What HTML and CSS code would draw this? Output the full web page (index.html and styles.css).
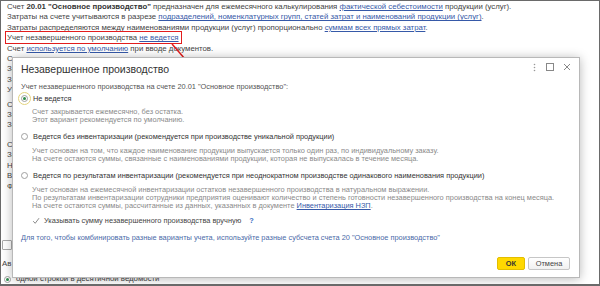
FILE: index.html
```html
<!DOCTYPE html>
<html lang="ru">

<head>
    <meta charset="UTF-8">
    <meta name="viewport" content="width=device-width, initial-scale=1.0">
    <title>Незавершенное производство</title>
    <link rel="stylesheet" href="styles.css">
</head>

<body>

    <div class="frame">

        <!-- account description behind the dialog -->
        <div class="page">
            <div class="group">
                <p class="ln">Счет <b>20.01 "Основное производство"</b> предназначен для ежемесячного калькулирования <a href="#">фактической себестоимости</a> продукции (услуг).</p>
                <p class="ln">Затраты на счете учитываются в разрезе <a href="#">подразделений, номенклатурных групп, статей затрат и наименований продукции (услуг)</a>.</p>
                <p class="ln">Затраты распределяются между наименованиями продукции (услуг) пропорционально <a href="#">суммам всех прямых затрат</a>.</p>
                <p class="ln"><span class="mark">Учет незавершенного производства <a href="#">не ведется</a></span></p>
                <p class="ln">Счет <a href="#">используется по умолчанию</a> при вводе документов.</p>
            </div>

            <!-- only the first letters peek out from under the dialog -->
            <div class="behind">
                <div class="group">
                    <p class="ln">Сч</p>
                    <p class="ln">За</p>
                    <p class="ln">За</p>
                    <p class="ln">Уч</p>
                </div>
                <div class="group">
                    <p class="ln">Сч</p>
                    <p class="ln">За</p>
                    <p class="ln">За</p>
                </div>
                <div class="group group-wide">
                    <p class="ln">Сч</p>
                    <p class="ln">За</p>
                    <p class="ln">Не</p>
                    <p class="ln">Вк</p>
                    <p class="ln">Фо</p>
                </div>
                <div class="page-check"><span class="box"></span></div>
                <p class="ln page-cut">Ав</p>
            </div>

            <div class="page-radio">
                <span class="radio on"></span>
                <span>одной строкой в десятичной ведомости</span>
            </div>
        </div>

        <svg class="arrow" width="600" height="286" viewBox="0 0 600 286">
            <line x1="171" y1="43" x2="184" y2="58" stroke="#e21d1d" stroke-width="1.5" />
        </svg>

        <div class="dialog">
            <div class="dlg-head">
                <div class="dlg-title">Незавершенное производство</div>
                <div class="dlg-tools">
                    <svg width="5" height="9" viewBox="0 0 5 9">
                        <circle cx="2.5" cy="1.5" r="0.8" fill="#999" />
                        <circle cx="2.5" cy="4.5" r="0.8" fill="#999" />
                        <circle cx="2.5" cy="7.5" r="0.8" fill="#999" />
                    </svg>
                    <svg width="8" height="8" viewBox="0 0 8 8">
                        <rect x="0.5" y="0.5" width="7" height="7" fill="none" stroke="#888" />
                    </svg>
                    <svg width="8" height="8" viewBox="0 0 8 8">
                        <path d="M1 1 L7 7 M7 1 L1 7" stroke="#888" stroke-width="1" />
                    </svg>
                </div>
            </div>

            <div class="dlg-body">
                <p class="lead">Учет незавершенного производства на счете 20.01 "Основное производство":</p>

                <div class="option">
                    <span class="radio on focus"></span>
                    <span>Не ведется</span>
                </div>
                <div class="desc">
                    <p>Счет закрывается ежемесячно, без остатка.</p>
                    <p>Этот вариант рекомендуется по умолчанию.</p>
                </div>

                <div class="option">
                    <span class="radio"></span>
                    <span>Ведется без инвентаризации (рекомендуется при производстве уникальной продукции)</span>
                </div>
                <div class="desc">
                    <p>Учет основан на том, что каждое наименование продукции выпускается только один раз, по индивидуальному заказу.</p>
                    <p>На счете остаются суммы, связанные с наименованиями продукции, которая не выпускалась в течение месяца.</p>
                </div>

                <div class="option">
                    <span class="radio"></span>
                    <span>Ведется по результатам инвентаризации (рекомендуется при неоднократном производстве одинакового наименования продукции)</span>
                </div>
                <div class="desc">
                    <p>Учет основан на ежемесячной инвентаризации остатков незавершенного производства в натуральном выражении.</p>
                    <p>По результатам инвентаризации сотрудники предприятия оценивают количество и степень готовности незавершенного производства на конец месяца.</p>
                    <p>На счете остаются суммы, рассчитанные из данных, указанных в документе <a href="#">Инвентаризация НЗП</a>.</p>
                </div>

                <div class="check">
                    <span class="box">
                        <svg width="8" height="8" viewBox="0 0 8 8">
                            <path d="M1.2 4.2 L3.2 6.3 L7 1.2" fill="none" stroke="#8a8a8a" stroke-width="1" />
                        </svg>
                    </span>
                    <span>Указывать сумму незавершенного производства вручную</span>
                    <span class="help">?</span>
                </div>

                <p class="hint">Для того, чтобы комбинировать разные варианты учета, используйте разные субсчета счета 20 "Основное производство"</p>
            </div>

            <div class="dlg-foot">
                <button class="btn btn-ok">ОК</button>
                <button class="btn">Отмена</button>
            </div>
        </div>

    </div>

</body>

</html>
```

FILE: styles.css
```css
body {
    margin: 0;
    padding: 0;
    background-color: #fff;
}

.frame {
    position: relative;
    box-sizing: border-box;
    width: 600px;
    height: 286px;
    overflow: hidden;
    border: 1px solid #6a6a6a;
    border-bottom-width: 2px;
    background-color: #fff;
    font-family: 'Liberation Sans', Arial, sans-serif;
}

/* page behind the dialog */

.page {
    padding: 1px 6px 0 6px;
    font-size: 7.8px;
    color: #444;
}

.page p {
    margin: 0;
}

.ln {
    line-height: 10.4px;
    white-space: nowrap;
}

.behind .group + .group {
    margin-top: 4px;
}

.behind .group-wide {
    margin-top: 9px !important;
}

.page a {
    color: #3659a8;
}

.page b {
    color: #333;
}

.mark {
    outline: 1.5px solid #e21d1d;
    outline-offset: 1px;
    padding-right: 1px;
}

.page-check {
    margin: 48px 0 0 -5px;
    height: 12px;
}

.page-check .box {
    display: block;
    width: 8px;
    height: 8px;
    border: 1px solid #aaa;
    border-radius: 1px;
}

.behind .page-cut {
    margin: 7px 0 0 -5px;
}

.page-radio {
    display: flex;
    align-items: center;
    gap: 5px;
    margin: 5px 0 0 -3px;
    line-height: 10px;
    white-space: nowrap;
}

.arrow {
    position: absolute;
    left: 0;
    top: 0;
}

/* dialog */

.dialog {
    position: absolute;
    left: 11px;
    top: 56px;
    width: 566px;
    height: 219px;
    display: flex;
    flex-direction: column;
    background-color: #fff;
    border: 1px solid #b8b8b8;
    box-shadow: 0 1px 10px rgba(0, 0, 0, 0.28);
    color: #555;
    font-size: 7.4px;
}

.dlg-head {
    display: flex;
    align-items: center;
    justify-content: space-between;
    padding: 4px 8px 0 8px;
    height: 14px;
}

.dlg-title {
    font-size: 10.5px;
    line-height: 14px;
    color: #333;
}

.dlg-tools {
    display: flex;
    align-items: center;
    gap: 9px;
    margin-top: -4px;
}

.dlg-body {
    flex: 1;
    padding: 0 8px;
}

.dlg-body p {
    margin: 0;
}

.lead {
    margin-top: 6px !important;
    line-height: 9px;
}

.option {
    display: flex;
    align-items: center;
    gap: 5px;
    margin-top: 2px;
    height: 10px;
    color: #333;
}

.desc + .option {
    margin-top: 7px;
}

.radio {
    position: relative;
    box-sizing: border-box;
    width: 7px;
    height: 7px;
    border: 1px solid #a0a0a0;
    border-radius: 50%;
    background-color: #fff;
    flex-shrink: 0;
}

.radio.on::after {
    content: "";
    position: absolute;
    left: 1px;
    top: 1px;
    width: 3px;
    height: 3px;
    border-radius: 50%;
    background-color: #2e8a4a;
}

.radio.focus {
    outline: 1px solid #e3d37c;
    outline-offset: 2px;
}

.desc {
    margin: 5px 0 0 11px;
    line-height: 8.4px;
    color: #8a8a8a;
}

.desc a {
    color: #3659a8;
}

.check {
    display: flex;
    align-items: center;
    gap: 4px;
    margin: 5px 0 0 11px;
    height: 10px;
    color: #444;
}

.check .box {
    display: flex;
    box-sizing: border-box;
    width: 8px;
    height: 8px;
}

.help {
    margin-left: 4px;
    color: #3b6fc4;
    font-weight: bold;
}

.hint {
    margin-top: 7px !important;
    line-height: 9px;
    color: #4a6aa8;
}

.dlg-foot {
    display: flex;
    justify-content: flex-end;
    gap: 3px;
    padding: 0 9px 7px 0;
}

.btn {
    box-sizing: border-box;
    height: 13px;
    padding: 0;
    font-family: 'Liberation Sans', Arial, sans-serif;
    font-size: 7.4px;
    color: #444;
    border: 1px solid #c6c6c6;
    border-radius: 2px;
    background: linear-gradient(#fff, #f1f1f1);
    width: 42px;
}

.btn-ok {
    width: 28px;
    font-weight: bold;
    color: #333;
    background: #ffd800;
    border-color: #e3be00;
}
```
